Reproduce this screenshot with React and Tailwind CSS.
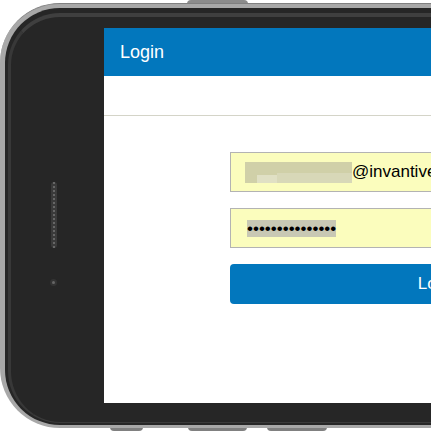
import React from 'react';

const Field = ({ children }) => (
  <div className="flex items-center h-10 w-[416px] pl-[14px] bg-[#fbfdbd] border border-[#b3b3b3] text-[17px] text-black">
    {children}
  </div>
);

const LoginPanel = () => (
  <div className="flex flex-col w-[560px] h-[375px] bg-white">
    <div className="flex items-center h-12 pl-4 bg-[#0277bd] text-white text-lg">Login</div>
    <div className="h-10 border-b border-[#d4d4c8]" />
    <div className="flex flex-col gap-4 pt-9 pl-[126px]">
      <Field>
        <span className="relative w-[107px] h-[21px] bg-[#d0d0a8]">
          <span className="absolute right-0 bottom-0 w-[75px] h-2.5 bg-[#d8d8b8]" />
          <span className="absolute left-[12px] bottom-0 w-[20px] h-2 bg-[#e0e0c4]" />
        </span>
        <span>@invantive.com</span>
      </Field>
      <Field>
        <span className="ml-[2px] h-[17px] flex items-center bg-[#c8c8b4] leading-none">
          •••••••••••••••
        </span>
      </Field>
      <button className="h-10 w-[417px] rounded-sm bg-[#0277bd] text-white text-[17px]">Login</button>
    </div>
  </div>
);

export default function App() {
  return (
    <div className="relative w-[431px] h-[431px] overflow-hidden bg-white font-['Liberation_Sans',Arial,sans-serif]">
      {/* side buttons */}
      <div className="absolute top-0 left-[187px] w-[61px] h-1 rounded-t-sm bg-[#8c8c8c]" />
      <div className="absolute bottom-0 left-[110px] w-[33px] h-1 rounded-b-sm bg-[#808080]" />
      <div className="absolute bottom-0 left-[188px] w-[59px] h-1 rounded-b-sm bg-[#808080]" />
      <div className="absolute bottom-0 left-[267px] w-[60px] h-1 rounded-b-sm bg-[#808080]" />

      {/* phone body */}
      <div className="relative mt-[3px] w-[700px] h-[425px] rounded-l-[60px] bg-[#a8a8a8] border-t border-[#808080] pt-1 pl-[5px] pb-[3px]">
        <div className="h-full rounded-l-[55px] bg-[#262626] pt-[5px] pl-[3px] pb-[2px]">
          <div className="flex h-full rounded-l-[52px] border-t-4 border-l-[3px] border-b border-t-[#3f3f3f] border-l-[#383838] border-b-[#3a3a3a]">
            <div className="flex flex-col items-center w-[86px] mr-[7px] pt-[165px]">
              <div className="flex justify-center w-[6px] h-[66px] rounded-full bg-[#3a3a3a]">
                <div className="w-[2px] h-full border-l-2 border-dotted border-[#666666]" />
              </div>
              <div className="flex items-center justify-center mt-[31px] mr-[1px] w-[7px] h-[7px] rounded-full bg-[#333333]">
                <div className="w-[3px] h-[3px] rounded-full bg-[#666666]" />
              </div>
            </div>
            <div className="pt-[11px]">
              <LoginPanel />
            </div>
          </div>
        </div>
      </div>
    </div>
  );
}
